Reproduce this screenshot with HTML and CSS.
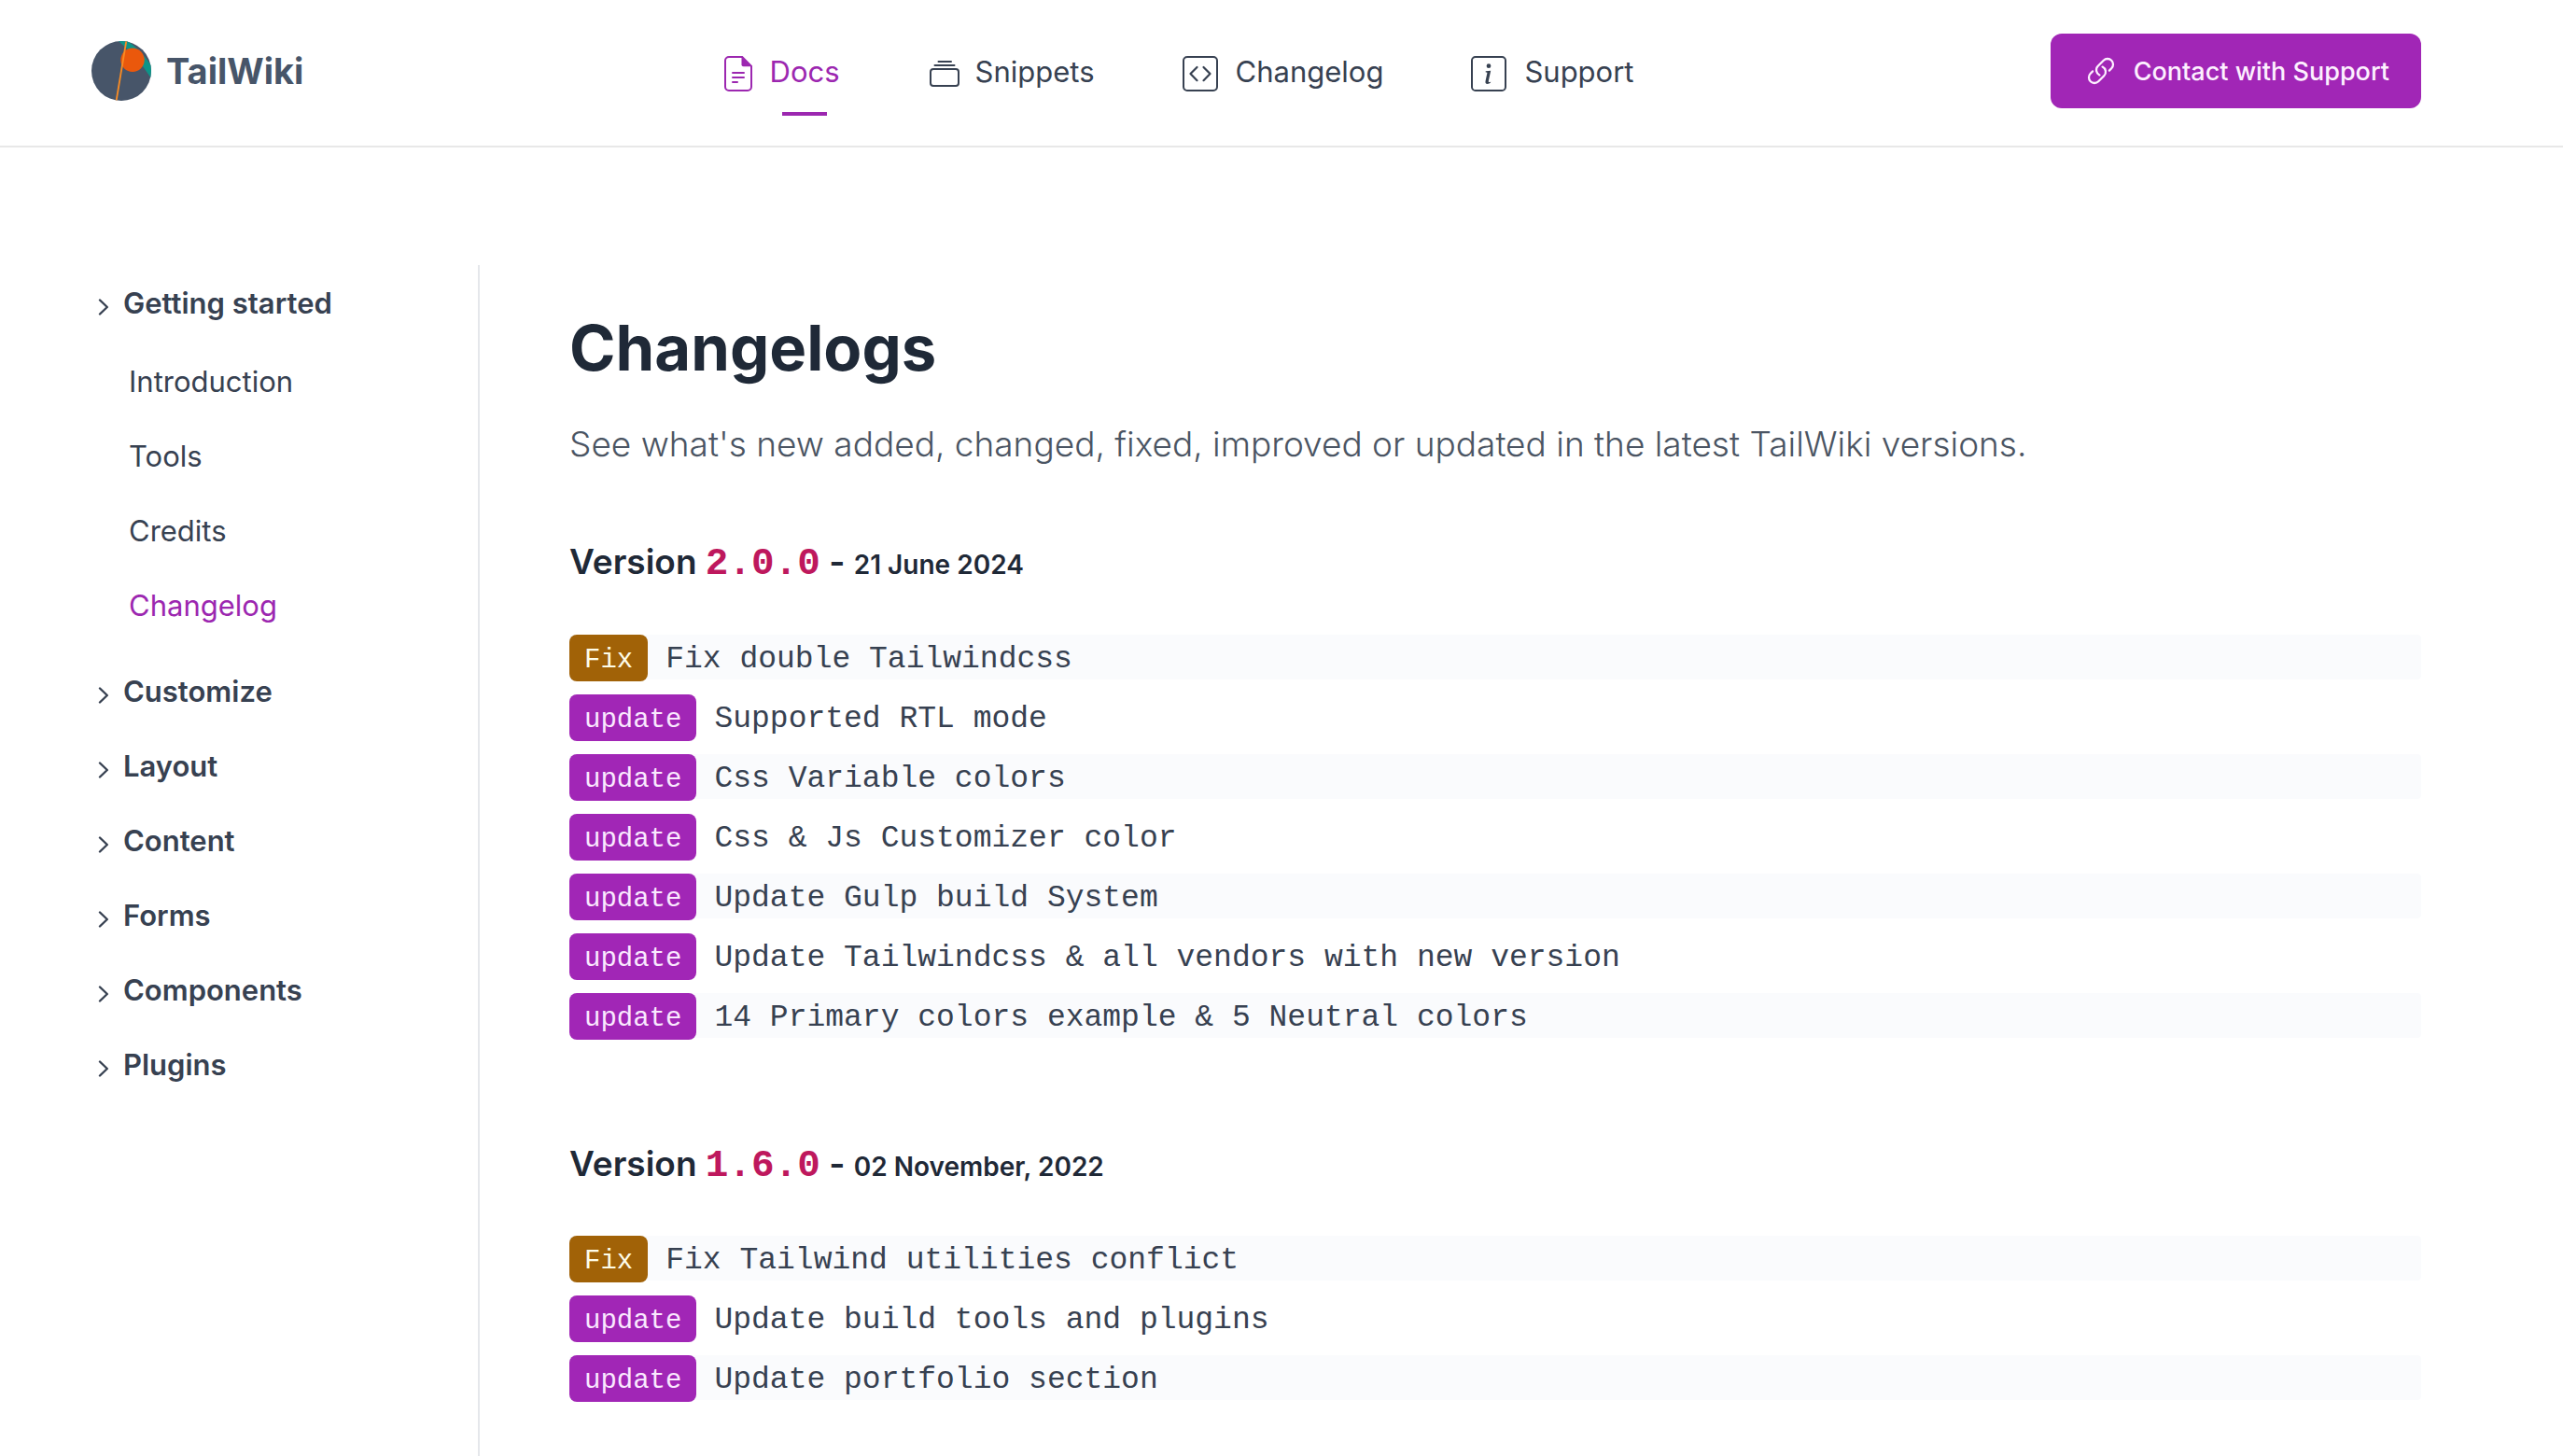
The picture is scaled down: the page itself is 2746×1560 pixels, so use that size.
FILE: index.html
```html
<!DOCTYPE html>
<html lang="en">
<head>
<meta charset="utf-8">
<meta name="viewport" content="width=device-width, initial-scale=1">
<title>Changelogs - TailWiki</title>
<link rel="stylesheet" href="styles.css">
</head>
<body>
<svg class="sprite" aria-hidden="true">
  <symbol id="chevron" viewBox="0 0 12 18"><path d="M2 1.500l7.800 7.500L2 16.500" fill="none" stroke="currentColor" stroke-width="2.400" stroke-linecap="round" stroke-linejoin="round"/></symbol>
</svg>
<header class="header">
  <a class="logo" href="#">
    <svg class="logo-mark" viewBox="0 0 64 64" aria-hidden="true">
      <defs><clipPath id="disc"><circle cx="32" cy="32" r="32"/></clipPath></defs>
      <g clip-path="url(#disc)">
        <rect width="64" height="64" fill="#475569"/>
        <path d="M29 0h10q14 10 25 26v14Q50 18 29 0z" fill="#0d9488"/>
        <circle cx="44" cy="20.300" r="12.700" fill="#ea580c"/>
        <path d="M37.300 0L26.600 64" stroke="#fb8c23" stroke-width="1.800"/>
      </g>
    </svg>
    <span class="logo-name">TailWiki</span>
  </a>
  <nav class="nav" aria-label="Main">
    <a class="nav-link nav-link-active" href="#">
      <svg width="30" height="38" viewBox="0 0 30 38" aria-hidden="true">
        <path d="M5 1h14.200L29 10.800V33a4 4 0 0 1-4 4H5a4 4 0 0 1-4-4V5a4 4 0 0 1 4-4z" fill="none" stroke="currentColor" stroke-width="2"/>
        <path d="M18.500 1L29 11.300h-8.500a2 2 0 0 1-2-2z" fill="currentColor"/>
        <path d="M9 18h12M9 23h12M9 28h5" stroke="currentColor" stroke-width="2" stroke-linecap="round"/>
      </svg>
      Docs
    </a>
    <a class="nav-link" href="#">
      <svg width="32" height="38" viewBox="-2 0 32 38" aria-hidden="true">
        <rect x="1" y="14" width="30" height="18" rx="3" fill="none" stroke="currentColor" stroke-width="2"/>
        <path d="M9.500 6h13.500M5.500 10h21" stroke="currentColor" stroke-width="2" stroke-linecap="round"/>
      </svg>
      Snippets
    </a>
    <a class="nav-link" href="#">
      <svg width="38" height="38" viewBox="0 0 38 38" aria-hidden="true">
        <rect x="1" y="1" width="36" height="36" rx="4" fill="none" stroke="currentColor" stroke-width="2"/>
        <path d="M15.500 12L8.500 19l7 7.200M22.500 12l7 7-7 7.200" fill="none" stroke="currentColor" stroke-width="2.200" stroke-linecap="round" stroke-linejoin="round"/>
      </svg>
      Changelog
    </a>
    <a class="nav-link" href="#">
      <svg width="38" height="38" viewBox="0 0 16 16" aria-hidden="true">
        <rect x=".42" y=".42" width="15.160" height="15.160" rx="1.600" fill="none" stroke="currentColor" stroke-width=".84"/>
        <path d="m8.930 6.588-2.290.287-.082.380.450.083c.294.070.352.176.288.469l-.738 3.468c-.194.897.105 1.319.808 1.319.545 0 1.178-.252 1.465-.598l.088-.416c-.2.176-.492.246-.686.246-.275 0-.375-.193-.304-.533L8.930 6.588zM9 4.500a1 1 0 1 1-2 0 1 1 0 0 1 2 0z" fill="currentColor"/>
      </svg>
      Support
    </a>
  </nav>
  <button class="contact" type="button">
    <svg width="32" height="32" viewBox="0 0 24 24" aria-hidden="true"><path d="M13.190 8.688a4.500 4.500 0 0 1 1.242 7.244l-4.500 4.500a4.500 4.500 0 0 1-6.364-6.364l1.757-1.757m13.350-.622 1.757-1.757a4.500 4.500 0 0 0-6.364-6.364l-4.500 4.500a4.500 4.500 0 0 0 1.242 7.244" fill="none" stroke="currentColor" stroke-width="1.700" stroke-linecap="round" stroke-linejoin="round"/></svg>
    Contact with Support
  </button>
</header>
<div class="page">
  <aside class="sidebar">
    <nav aria-label="Documentation">
      <ul class="menu">
        <li>
          <a class="menu-title" href="#"><svg class="chevron" aria-hidden="true"><use href="#chevron"/></svg>Getting started</a>
          <ul class="submenu">
            <li><a href="#">Introduction</a></li>
            <li><a href="#">Tools</a></li>
            <li><a href="#">Credits</a></li>
            <li><a class="current" href="#" aria-current="page">Changelog</a></li>
          </ul>
        </li>
        <li><a class="menu-title" href="#"><svg class="chevron" aria-hidden="true"><use href="#chevron"/></svg>Customize</a></li>
        <li><a class="menu-title" href="#"><svg class="chevron" aria-hidden="true"><use href="#chevron"/></svg>Layout</a></li>
        <li><a class="menu-title" href="#"><svg class="chevron" aria-hidden="true"><use href="#chevron"/></svg>Content</a></li>
        <li><a class="menu-title" href="#"><svg class="chevron" aria-hidden="true"><use href="#chevron"/></svg>Forms</a></li>
        <li><a class="menu-title" href="#"><svg class="chevron" aria-hidden="true"><use href="#chevron"/></svg>Components</a></li>
        <li><a class="menu-title" href="#"><svg class="chevron" aria-hidden="true"><use href="#chevron"/></svg>Plugins</a></li>
      </ul>
    </nav>
  </aside>
  <main class="content">
    <h1>Changelogs</h1>
    <p class="lead">See what's new added, changed, fixed, improved or updated in the latest TailWiki versions.</p>
    <section class="release">
      <h2>Version <code>2.0.0</code> - <small>21 June 2024</small></h2>
      <ul class="changes">
        <li><span class="badge badge-fix">Fix</span>Fix double Tailwindcss</li>
        <li><span class="badge">update</span>Supported RTL mode</li>
        <li><span class="badge">update</span>Css Variable colors</li>
        <li><span class="badge">update</span>Css &amp; Js Customizer color</li>
        <li><span class="badge">update</span>Update Gulp build System</li>
        <li><span class="badge">update</span>Update Tailwindcss &amp; all vendors with new version</li>
        <li><span class="badge">update</span>14 Primary colors example &amp; 5 Neutral colors</li>
      </ul>
    </section>
    <section class="release">
      <h2>Version <code>1.6.0</code> - <small>02 November, 2022</small></h2>
      <ul class="changes">
        <li><span class="badge badge-fix">Fix</span>Fix Tailwind utilities conflict</li>
        <li><span class="badge">update</span>Update build tools and plugins</li>
        <li><span class="badge">update</span>Update portfolio section</li>
      </ul>
    </section>
  </main>
</div>
</body>
</html>
```
FILE: styles.css
```css
* { box-sizing: border-box; }

body {
  margin: 0;
  min-height: 100vh;
  display: flex;
  flex-direction: column;
  background: #fff;
  color: #374151;
  font-family: Inter, "Liberation Sans", sans-serif;
  font-size: 31px;
  line-height: 48px;
}

a { color: inherit; text-decoration: none; }
ul { list-style: none; margin: 0; padding: 0; }
.sprite { display: none; }

.header {
  display: flex;
  align-items: center;
  justify-content: space-between;
  padding: 36px 152px 40px 98px;
  border-bottom: 2px solid #e8e8e8;
}

.logo { display: flex; align-items: center; gap: 16px; color: #475569; }
.logo-mark { width: 64px; height: 64px; }
.logo-name { font-size: 38px; font-weight: 700; }

.nav { display: flex; gap: 94px; padding: 2px 0 0 4px; }
.nav-link { position: relative; display: flex; align-items: center; gap: 19px; }
.nav-link svg { margin-top: 4px; overflow: visible; }
.nav-link-active { color: #9c27b0; }
.nav-link-active::after {
  content: "";
  position: absolute;
  left: 50%;
  bottom: -23px;
  width: 48px;
  height: 4px;
  background: currentColor;
}

.contact {
  display: flex;
  align-items: center;
  gap: 19px;
  height: 80px;
  padding: 0 34px 0 38px;
  border: 0;
  border-radius: 12px;
  background: #a126b6;
  color: #fdf0ff;
  font-family: inherit;
  font-size: 27px;
  font-weight: 500;
}

.page { flex: 1; display: flex; padding: 126px 152px 0 98px; }

.sidebar {
  flex: 0 0 416px;
  padding-top: 1px;
  border-right: 2px solid #e5e7eb;
}
.menu-title { display: flex; align-items: center; gap: 15px; height: 80px; font-weight: 600; }
.chevron { width: 12px; height: 18px; margin: 8px 0 0 7px; }
.submenu { padding: 4px 0 12px 40px; }
.submenu a { display: block; line-height: 80px; }
.current { color: #9c27b0; }

.content { flex: 1; min-width: 0; padding: 49px 0 60px 96px; }

h1 { margin: 0; color: #1f2937; font-size: 67px; line-height: 80px; }
.lead { margin: 35px 0 0; color: #4b5563; font-size: 37px; font-weight: 300; line-height: 56px; }

h2 { margin: 0; color: #1f2937; font-size: 37px; font-weight: 600; line-height: 56px; }
h2 code { color: #be185d; font-family: "Liberation Mono", monospace; font-size: 41px; font-weight: 700; line-height: 1px; }
h2 small { font-size: 28px; line-height: 1px; }

.release { padding-top: 70px; }
.release + .release { padding-top: 107px; }
.changes {
  display: grid;
  gap: 16px;
  padding-top: 50px;
  font-family: "Liberation Mono", monospace;
  font-size: 33px;
  line-height: 54px;
}
.release + .release .changes { padding-top: 49px; }
.changes li { display: flex; align-items: flex-start; height: 48px; border-radius: 4px; }
.changes li:nth-child(odd) { background: #fafbfd; }
.badge {
  height: 50px;
  margin-right: 19px;
  padding: 0 16px;
  border-radius: 8px;
  background: #a126b6;
  color: #fae8ff;
  font-size: 29px;
  line-height: 56px;
}
.badge-fix { background: #a16207; color: #fefce8; }
```
